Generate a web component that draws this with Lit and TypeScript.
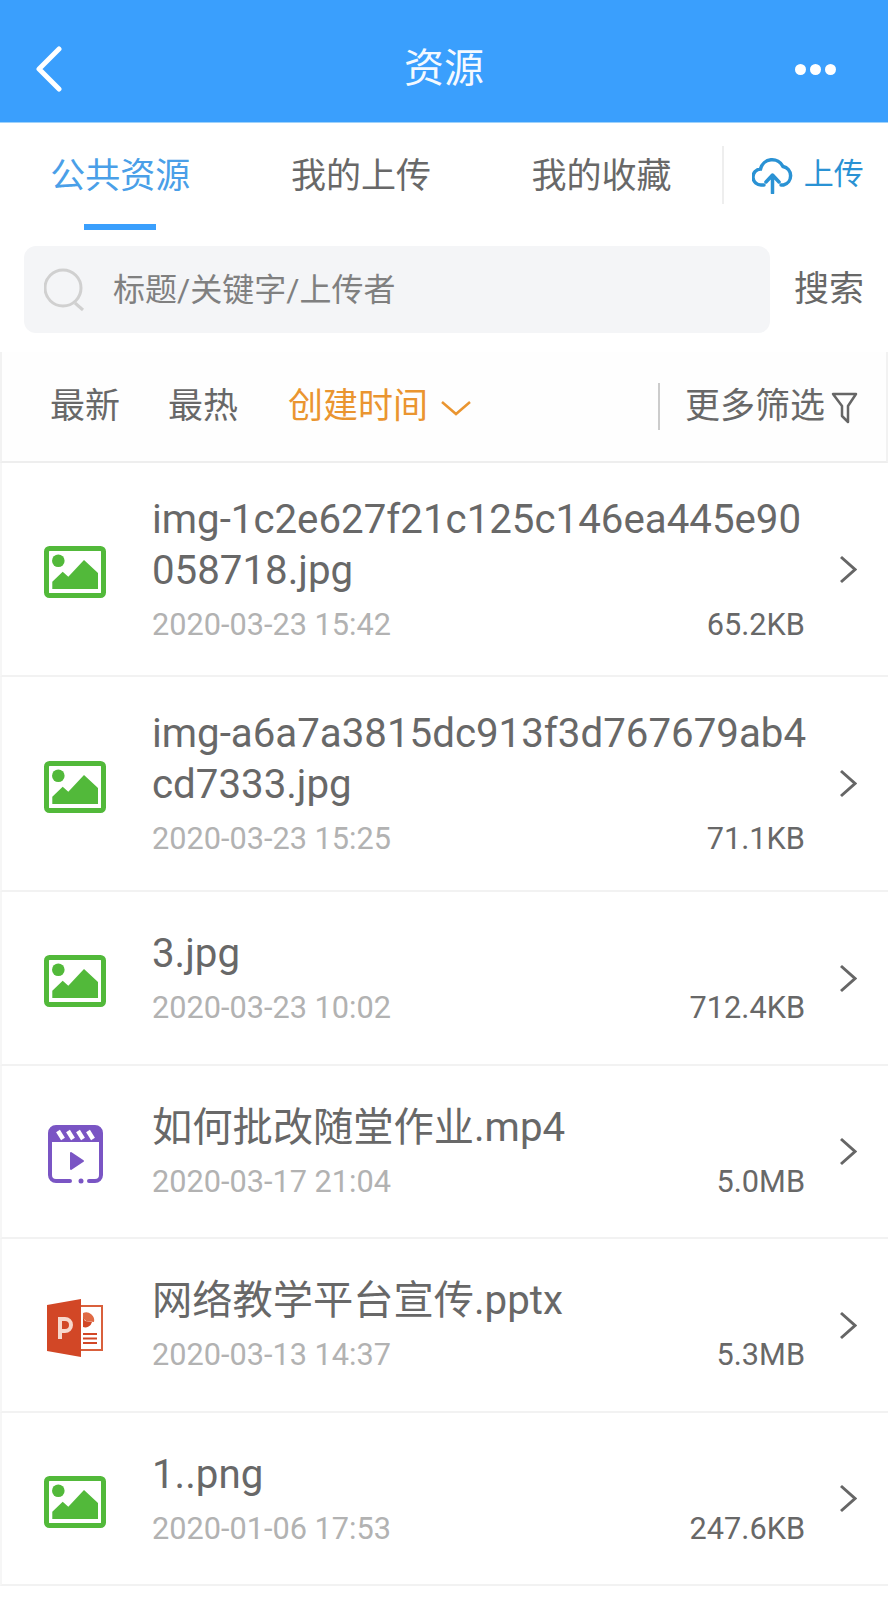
import { LitElement, html, css, svg } from 'lit'
import { customElement } from 'lit/decorators.js'

type Kind = 'image' | 'video' | 'ppt'

interface FileRow {
  kind: Kind
  name: string
  date: string
  size: string
  height: number
}

const FILES: FileRow[] = [
  { kind: 'image', name: 'img-1c2e627f21c125c146ea445e90058718.jpg', date: '2020-03-23 15:42', size: '65.2KB', height: 214 },
  { kind: 'image', name: 'img-a6a7a3815dc913f3d767679ab4cd7333.jpg', date: '2020-03-23 15:25', size: '71.1KB', height: 215 },
  { kind: 'image', name: '3.jpg', date: '2020-03-23 10:02', size: '712.4KB', height: 174 },
  { kind: 'video', name: '如何批改随堂作业.mp4', date: '2020-03-17 21:04', size: '5.0MB', height: 173 },
  { kind: 'ppt', name: '网络教学平台宣传.pptx', date: '2020-03-13 14:37', size: '5.3MB', height: 174 },
  { kind: 'image', name: '1..png', date: '2020-01-06 17:53', size: '247.6KB', height: 173 },
]

const ICONS: Record<Kind, unknown> = {
  image: svg`<svg class="file-icon" viewBox="0 0 62 52" width="62" height="52">
    <rect x="2.500" y="2.500" width="57" height="47" rx="3" fill="none" stroke="#52b93a" stroke-width="5"/>
    <circle cx="14.300" cy="14.700" r="6.300" fill="#52b93a"/>
    <path d="M8.300 43v-7.300l10.400-10 5.600 5L40 14l14 13v16z" fill="#52b93a"/>
  </svg>`,
  video: svg`<svg class="file-icon" viewBox="0 0 55 59" width="55" height="59">
    <path d="M22 56H8a6 6 0 0 1-6-6V8a6 6 0 0 1 6-6h39a6 6 0 0 1 6 6v42a6 6 0 0 1-6 6H41" fill="none" stroke="#7a55c4" stroke-width="4" stroke-linecap="round"/>
    <path d="M2 8a6 6 0 0 1 6-6h39a6 6 0 0 1 6 6v9H2z" fill="#7a55c4"/>
    <path d="M10 6l5 8M20 6l5 8M30 6l5 8M40 6l5 8" stroke="#fff" stroke-width="4.500" fill="none"/>
    <path d="M23 28l12 8-12 8z" fill="#7a55c4" stroke="#7a55c4" stroke-width="2" stroke-linejoin="round"/>
    <circle cx="33" cy="56" r="2.500" fill="#7a55c4"/>
  </svg>`,
  ppt: svg`<svg class="file-icon" viewBox="0 0 57 58" width="57" height="58">
    <path d="M33 7h22v44H33" fill="#fff" stroke="#d9603c" stroke-width="2"/>
    <path d="M36 14a8 8 0 0 1 11 9l-8-1-3-3z" fill="#e06a45"/>
    <path d="M36 18v10a7 7 0 0 0 9-5l-7-1z" fill="#d24726"/>
    <path d="M36 35h14M36 39.500h14M36 44h14" stroke="#d24726" stroke-width="2"/>
    <path d="M0 6l34-6v58L0 52z" fill="#d24726"/>
    <path d="M13 40V20h5a6 6 0 0 1 0 12h-5" fill="none" stroke="#f7d8cc" stroke-width="4"/>
  </svg>`,
}

@customElement('app-root')
export class AppRoot extends LitElement {
  static styles = css`
    :host {
      display: block;
      width: 888px;
      min-height: 1600px;
      background: #fff;
      color: #686868;
      font-family: Roboto, 'Noto Sans CJK SC', sans-serif;
      overflow: hidden;
    }
    .header {
      height: 123px;
      background: #3a9ffd;
      display: grid;
      grid-template-columns: 1fr auto 1fr;
      align-items: center;
      padding: 16px 36px 0;
      border-bottom: 1px solid #9fd2fb;
      box-sizing: border-box;
    }
    .title { color: #f4f9ff; font-size: 40px; line-height: 50px; }
    .back { width: 26px; height: 46px; display: block; }
    .dots { justify-self: end; display: flex; gap: 4px; margin-right: 16px; }
    .dots i { width: 11px; height: 11px; border-radius: 50%; background: #fff; }

    .tabs { display: flex; height: 123px; }
    .tab {
      width: 240.600px;
      height: 107px;
      box-sizing: border-box;
      font-size: 35px;
      line-height: 50px;
      padding-top: 29px;
      text-align: center;
      position: relative;
    }
    .tab.active { color: #4a9fe8; }
    .tab.active::after {
      content: '';
      position: absolute;
      left: 84px;
      bottom: 0;
      width: 72px;
      height: 6px;
      background: #3a9ffd;
    }
    .upload {
      flex: 1;
      height: 58px;
      margin-top: 23px;
      border-left: 2px solid #eee;
      display: flex;
      align-items: center;
      gap: 11px;
      padding-left: 28px;
      color: #2a92d4;
      font-size: 30px;
    }
    .upload span { margin-bottom: 9px; }
    .cloud { width: 41px; height: 38px; flex: none; }

    .search {
      display: flex;
      align-items: center;
      padding-left: 24px;
      height: 87px;
    }
    .search-box {
      width: 746px;
      height: 87px;
      background: #f4f5f7;
      border-radius: 12px;
      display: flex;
      align-items: center;
      box-sizing: border-box;
      padding-left: 20px;
      gap: 27px;
      color: #808080;
      font-size: 32px;
    }
    .search-box span { margin-bottom: 6px; }
    .search-icon { width: 42px; height: 44px; flex: none; }
    .search-btn { margin: 0 0 8px 24px; font-size: 35px; }

    .filter {
      margin-top: 19px;
      height: 111px;
      box-sizing: border-box;
      display: flex;
      align-items: center;
      padding-left: 48px;
      font-size: 35px;
      background: #fefefe;
      border-left: 2px solid #f2f2f2;
      border-right: 2px solid #f2f2f2;
      border-bottom: 2px solid #eee;
    }
    .sort { margin: 0 48px 9px 0; }
    .sort.on { color: #ea9530; margin-left: 2px; margin-right: 13px; }
    .caret { width: 30px; height: 17px; margin-top: 3px; }
    .more {
      margin-left: auto;
      height: 47px;
      border-left: 2px solid #ccc;
      padding-left: 25px;
      display: flex;
      align-items: center;
      gap: 6px;
      margin-right: 28px;
    }
    .more span { margin-bottom: 9px; }
    .funnel { width: 27px; height: 32px; margin-top: 2px; }

    .row {
      display: flex;
      align-items: center;
      box-sizing: border-box;
      border-bottom: 2px solid #f2f2f2;
      border-left: 2px solid #f6f6f6;
    }
    .icon-cell {
      width: 150px;
      flex: none;
      display: flex;
      justify-content: center;
      padding: 6px 4px 0 0;
      box-sizing: border-box;
    }
    .file-icon { display: block; }
    .main { width: 653px; flex: none; }
    .name {
      font-size: 40.250px;
      line-height: 51px;
      word-break: break-all;
      width: 665px;
    }
    .meta {
      display: flex;
      justify-content: space-between;
      margin-top: 9px;
      line-height: 40px;
      font-size: 30.700px;
    }
    .date { color: #b2b2b2; }
    .chev { width: 18px; height: 29px; margin-left: 34px; flex: none; }
  `

  private renderRow(f: FileRow) {
    return html`
      <div class="row" style="height:${f.height}px">
        <div class="icon-cell">${ICONS[f.kind]}</div>
        <div class="main">
          <div class="name">${f.name}</div>
          <div class="meta"><span class="date">${f.date}</span><span>${f.size}</span></div>
        </div>
        <svg class="chev" viewBox="0 0 18 29"><path d="M2 2l14 12.500L2 27" fill="none" stroke="#666" stroke-width="3"/></svg>
      </div>
    `
  }

  render() {
    return html`
      <div class="header">
        <svg class="back" viewBox="0 0 26 46"><path d="M23 3L3 23l20 20" fill="none" stroke="#fff" stroke-width="5" stroke-linecap="round" stroke-linejoin="round"/></svg>
        <div class="title">资源</div>
        <div class="dots"><i></i><i></i><i></i></div>
      </div>
      <div class="tabs">
        <div class="tab active">公共资源</div>
        <div class="tab">我的上传</div>
        <div class="tab">我的收藏</div>
        <div class="upload">
          <svg class="cloud" viewBox="0 0 41 38">
            <path d="M12 29H9.500a8 8 0 0 1-1-16A12 12 0 0 1 31 10.500a9.500 9.500 0 0 1 .5 18.500H29" fill="none" stroke="#2a92d4" stroke-width="3.500" stroke-linecap="round"/>
            <path d="M20.500 37V20M14 26l6.500-7 6.500 7" fill="none" stroke="#2a92d4" stroke-width="3.500" stroke-linecap="round" stroke-linejoin="round"/>
          </svg>
          <span>上传</span>
        </div>
      </div>
      <div class="search">
        <div class="search-box">
          <svg class="search-icon" viewBox="0 0 42 44">
            <circle cx="19" cy="20" r="18" fill="none" stroke="#d0d0d0" stroke-width="3"/>
            <path d="M31 35l8 7" fill="none" stroke="#d0d0d0" stroke-width="3"/>
          </svg>
          <span>标题/关键字/上传者</span>
        </div>
        <div class="search-btn">搜索</div>
      </div>
      <div class="filter">
        <span class="sort">最新</span>
        <span class="sort">最热</span>
        <span class="sort on">创建时间</span>
        <svg class="caret" viewBox="0 0 30 17"><path d="M1 2l14 12L29 2" fill="none" stroke="#ea9530" stroke-width="2.500"/></svg>
        <div class="more">
          <span>更多筛选</span>
          <svg class="funnel" viewBox="0 0 27 32"><path d="M2 2h23l-8 12v16l-6-6V14z" fill="none" stroke="#666" stroke-width="2.500" stroke-linejoin="round"/></svg>
        </div>
      </div>
      ${FILES.map(f => this.renderRow(f))}
    `
  }
}
